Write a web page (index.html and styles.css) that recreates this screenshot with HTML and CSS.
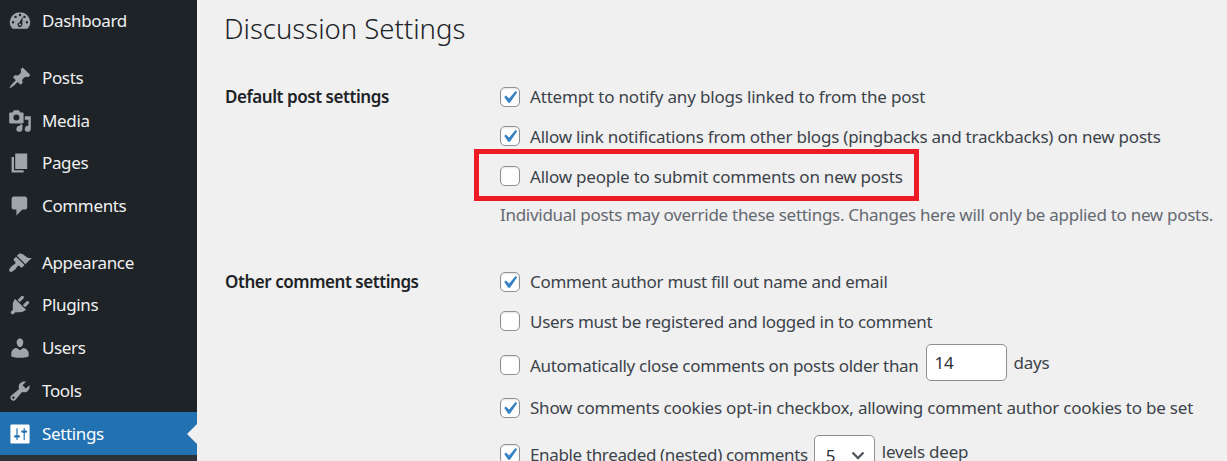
FILE: index.html
```html
<!DOCTYPE html>
<html lang="en">
<head>
<meta charset="utf-8">
<title>Discussion Settings</title>
<link rel="stylesheet" href="styles.css">
</head>
<body>
<div class="layout">
<nav class="menu">
<a class="item"><svg class="icon" viewBox="0 0 20 20"><path fill-rule="evenodd" d="M3.760 16.500h12.480A7.998 7.998 0 0 0 10 3a8 8 0 0 0-6.240 13.500zM9 5a1 1 0 1 1 2 0 1 1 0 0 1-2 0zM5.300 6.600a1 1 0 1 1 2 0 1 1 0 0 1-2 0zM12.700 6.600a1 1 0 1 1 2 0 1 1 0 0 1-2 0zM3.200 11a1 1 0 1 1 2 0 1 1 0 0 1-2 0zM14.800 11a1 1 0 1 1 2 0 1 1 0 0 1-2 0zM12.200 6.700l-.3 6a2 2 0 1 1-2.500-1.500zM10 12.100a.9.9 0 1 0 0 1.800.9.9 0 0 0 0-1.800z"/></svg><span>Dashboard</span></a>
<div class="separator"></div>
<a class="item"><svg class="icon" viewBox="0 0 20 20"><path d="M10.440 3.020l1.820-1.820 6.360 6.350-1.830 1.820c-1.050-.68-2.480-.57-3.410.36l-.75.75c-.92.93-1.040 2.350-.35 3.410l-1.830 1.820-2.410-2.410-2.800 2.790c-.42.42-3.380 2.710-3.800 2.290s1.860-3.390 2.280-3.810l2.790-2.790L4.100 9.360l1.830-1.820c1.050.69 2.480.57 3.400-.36l.75-.75c.93-.92 1.050-2.350.36-3.410z"/></svg><span>Posts</span></a>
<a class="item"><svg class="icon" viewBox="0 0 20 20"><path fill-rule="evenodd" d="M13 11V4c0-.55-.45-1-1-1h-1.670L9 1H5L3.670 3H2c-.55 0-1 .45-1 1v7c0 .55.45 1 1 1h10c.55 0 1-.45 1-1zM7 4.500a2.500 2.500 0 1 1 0 5 2.500 2.500 0 0 1 0-5zM14 6h5v10.500a2.500 2.500 0 1 1-2-2.450V9h-3V6zm-4 8.050V13h2v3.500a2.500 2.500 0 1 1-2-2.450z"/></svg><span>Media</span></a>
<a class="item"><svg class="icon" viewBox="0 0 20 20"><path d="M6 15V2h10v13H6zm-1 1h8v2H3V5h2v11z"/></svg><span>Pages</span></a>
<a class="item"><svg class="icon" viewBox="0 0 20 20"><path d="M5 2h9c1.100 0 2 .9 2 2v7c0 1.100-.9 2-2 2h-2l-5 5v-5H5c-1.100 0-2-.9-2-2V4c0-1.100.9-2 2-2z"/></svg><span>Comments</span></a>
<div class="separator"></div>
<a class="item"><svg class="icon" viewBox="0 0 20 20"><path d="M14.480 11.060L7.410 3.990l1.500-1.500c.5-.56 2.300-.47 3.510.32 1.210.8 1.430 1.280 2.910 2.100 1.180.64 2.450 1.260 4.450.85zm-.71.71L6.700 4.700 4.930 6.470c-.39.39-.39 1.020 0 1.410l1.060 1.060c.39.39.39 1.030 0 1.420-.6.6-1.430 1.110-2.210 1.690-.35.26-.7.53-1.010.84C1.430 14.230.4 16.080 1.400 17.070c.99 1 2.840-.03 4.180-1.360.31-.31.58-.66.85-1.020.57-.78 1.080-1.610 1.690-2.210.39-.39 1.020-.39 1.410 0l1.060 1.060c.39.39 1.020.39 1.410 0z"/></svg><span>Appearance</span></a>
<a class="item"><svg class="icon" viewBox="0 0 20 20"><path d="M13.110 4.360L9.870 7.600 8 5.730l3.240-3.240c.35-.34 1.050-.2 1.560.32.52.51.66 1.210.31 1.550zm-8 1.770l.91-1.120 9.010 9.010-1.190.84c-.71.71-2.630 1.160-3.820 1.160H6.140L4.900 17.260c-.59.59-1.540.59-2.120 0-.59-.58-.59-1.530 0-2.120l1.240-1.240v-3.880c0-1.130.4-3.190 1.090-3.890zm7.260 3.970l3.240-3.240c.34-.35 1.040-.21 1.550.31.52.51.66 1.210.31 1.550l-3.240 3.250z"/></svg><span>Plugins</span></a>
<a class="item"><svg class="icon" viewBox="0 0 20 20"><path d="M10 9.250c-2.270 0-2.730-3.440-2.730-3.440C7 4.020 7.820 2 9.970 2c2.160 0 2.980 2.020 2.710 3.810 0 0-.41 3.440-2.680 3.440zm0 2.570L12.720 10c2.390 0 4.520 2.330 4.520 4.530v2.490s-3.650 1.130-7.240 1.130c-3.650 0-7.240-1.130-7.240-1.130v-2.490c0-2.250 1.940-4.480 4.470-4.480z"/></svg><span>Users</span></a>
<a class="item"><svg class="icon" viewBox="0 0 20 20"><path fill-rule="evenodd" d="M16.680 9.770c-1.340 1.340-3.300 1.670-4.950.99l-5.410 6.520c-.99.99-2.590.99-3.580 0s-.99-2.590 0-3.570l6.520-5.420c-.68-1.650-.35-3.610.99-4.950 1.280-1.280 3.120-1.620 4.720-1.060l-2.890 2.890 2.820 2.820 2.860-2.870c.53 1.580.18 3.390-1.080 4.650zM3.810 16.210c.4.39 1.040.39 1.430 0 .4-.4.4-1.040 0-1.430-.39-.4-1.030-.4-1.430 0-.39.39-.39 1.030 0 1.430z"/></svg><span>Tools</span></a>
<a class="item current"><svg class="icon" viewBox="0 0 20 20"><path fill-rule="evenodd" d="M18 16V3q0-1-1-1H3q-1 0-1 1v14q0 1 1 1h14q1 0 1-1zM8 11h1c.55 0 1 .45 1 1s-.45 1-1 1H8v1.500c0 .28-.22.5-.5.5s-.5-.22-.5-.5V13H6c-.55 0-1-.45-1-1s.45-1 1-1h1V5.500c0-.28.22-.5.5-.5s.5.22.5.5V11zm5-2h-1c-.55 0-1-.45-1-1s.45-1 1-1h1V5.500c0-.28.22-.5.5-.5s.5.22.5.5V7h1c.55 0 1 .45 1 1s-.45 1-1 1h-1v5.500c0 .28-.22.5-.5.5s-.5-.22-.5-.5V9z"/></svg><span>Settings</span></a>
<div class="submenu"></div>
</nav>
<main class="content">
<h1>Discussion Settings</h1>
<section class="group">
<h2>Default post settings</h2>
<div class="options">
<label class="row"><span class="box"><svg viewBox="0 0 20 20"><path d="M14.830 4.890l1.340.94-5.810 8.380H9.020L5.780 9.670l1.340-1.250 2.570 2.400z"/></svg></span><span class="text notify">Attempt to notify any blogs linked to from the post</span></label>
<label class="row"><span class="box"><svg viewBox="0 0 20 20"><path d="M14.830 4.890l1.340.94-5.810 8.380H9.020L5.780 9.670l1.340-1.250 2.570 2.400z"/></svg></span><span class="text">Allow link notifications from other blogs (pingbacks and trackbacks) on new posts</span></label>
<label class="row marked"><span class="box"></span><span class="text">Allow people to submit comments on new posts</span></label>
<p class="note">Individual posts may override these settings. Changes here will only be applied to new posts.</p>
</div>
</section>
<section class="group">
<h2>Other comment settings</h2>
<div class="options">
<label class="row"><span class="box"><svg viewBox="0 0 20 20"><path d="M14.830 4.890l1.340.94-5.810 8.380H9.020L5.780 9.670l1.340-1.250 2.570 2.400z"/></svg></span><span class="text tight">Comment author must fill out name and email</span></label>
<label class="row"><span class="box"></span><span class="text tight">Users must be registered and logged in to comment</span></label>
<label class="row tall"><span class="box"></span><span class="text tight">Automatically close comments on posts older than</span><span class="field">14</span><span class="suffix">days</span></label>
<label class="row cookies"><span class="box"><svg viewBox="0 0 20 20"><path d="M14.830 4.890l1.340.94-5.810 8.380H9.020L5.780 9.670l1.340-1.250 2.570 2.400z"/></svg></span><span class="text">Show comments cookies opt-in checkbox, allowing comment author cookies to be set</span></label>
<label class="row threaded"><span class="box"><svg viewBox="0 0 20 20"><path d="M14.830 4.890l1.340.94-5.810 8.380H9.020L5.780 9.670l1.340-1.250 2.570 2.400z"/></svg></span><span class="text tighter">Enable threaded (nested) comments</span><span class="field select">5<svg viewBox="0 0 14 9"><path d="M1.500 1.500L7 7l5.500-5.500"/></svg></span><span class="suffix">levels deep</span></label>
</div>
</section>
</main>
</div>
</body>
</html>
```
FILE: styles.css
```css
*, *::before, *::after { box-sizing: border-box; }
body {
  margin: 0;
  overflow: hidden;
  background: #f0f0f0;
  color: #3c434a;
  font: 17px/24px "Noto Sans", sans-serif;
}
.layout { display: flex; width: 1227px; height: 461px; overflow: hidden; }
.menu { flex: 0 0 197px; background: #1d2327; }
.item {
  display: flex;
  align-items: center;
  gap: 10px;
  height: 42.8px;
  padding-left: 8px;
  color: #f0f0f1;
  letter-spacing: -0.35px;
}
.icon { width: 24px; height: 24px; fill: #a0a5aa; }
.separator { height: 13.6px; }
.current { position: relative; background: #2271b1; color: #fff; }
.current .icon { fill: #fff; }
.current::after {
  content: "";
  position: absolute;
  right: 0;
  top: 11.5px;
  border: 10px solid transparent;
  border-right-color: #f0f0f0;
  border-left: 0;
}
.submenu { height: 10px; background: #2c3338; }
.content { flex: 1; padding: 9px 0 0 28px; }
h1 {
  margin: 0 0 0 -1px;
  height: 68px;
  color: #1d2327;
  font: 350 27.5px/40px "Noto Sans", "Open Sans", sans-serif;
}
.group { display: grid; grid-template-columns: 275px 1fr; height: 185px; }
h2 { margin: 8px 0 0; color: #1d2327; font-size: 17px; font-weight: 600; line-height: 24px; letter-spacing: -0.45px; }
.row {
  display: flex;
  align-items: center;
  gap: 10px;
  height: 39.4px;
  white-space: nowrap;
  letter-spacing: -0.22px;
}
.text { padding-top: 1px; }
.notify { letter-spacing: -0.18px; }
.tight { letter-spacing: -0.3px; }
.tighter { letter-spacing: -0.35px; }
.box {
  flex: 0 0 20px;
  width: 20px;
  min-width: 0;
  height: 20px;
  border: 1px solid #8c8f94;
  border-radius: 5px;
  background: #fff;
  box-shadow: inset 0 1px 2px rgba(0, 0, 0, .1);
}
.box svg { display: block; width: 25px; height: 25px; margin: -3px 0 0 -4.500px; fill: #3582c4; }
.marked { position: relative; }
.marked .box { margin-top: 1px; }
.marked .text { padding-top: 3px; }
.marked::after {
  content: "";
  position: absolute;
  left: -26px;
  top: -6.800px;
  width: 445px;
  height: 52px;
  border: 5px solid #ed1c24;
}
.note { margin: 8px 0 0; color: #646970; white-space: nowrap; letter-spacing: -0.285px; }
.tall { height: 47px; }
.tall .box { margin-top: 2px; }
.tall .text { padding-top: 3px; }
.cookies { height: 40px; }
.threaded { height: 51px; }
.threaded .box { margin-top: 1px; }
.threaded .text { padding-top: 3px; }
.field {
  width: 81px;
  height: 37px;
  margin: -4px 0 0 -3px;
  padding: 6px 8px;
  border: 1px solid #8c8f94;
  border-radius: 5px;
  background: #fff;
  color: #2c3338;
}
.select { display: flex; justify-content: space-between; width: 61px; height: 38px; margin: 2px 0 0 -4px; padding: 8px 9px 0 11px; }
.select svg { width: 14px; height: 9px; margin-top: 7px; fill: none; stroke: #50575e; stroke-width: 2.3; }
.suffix { margin: -2px 0 0 -3px; }
```
